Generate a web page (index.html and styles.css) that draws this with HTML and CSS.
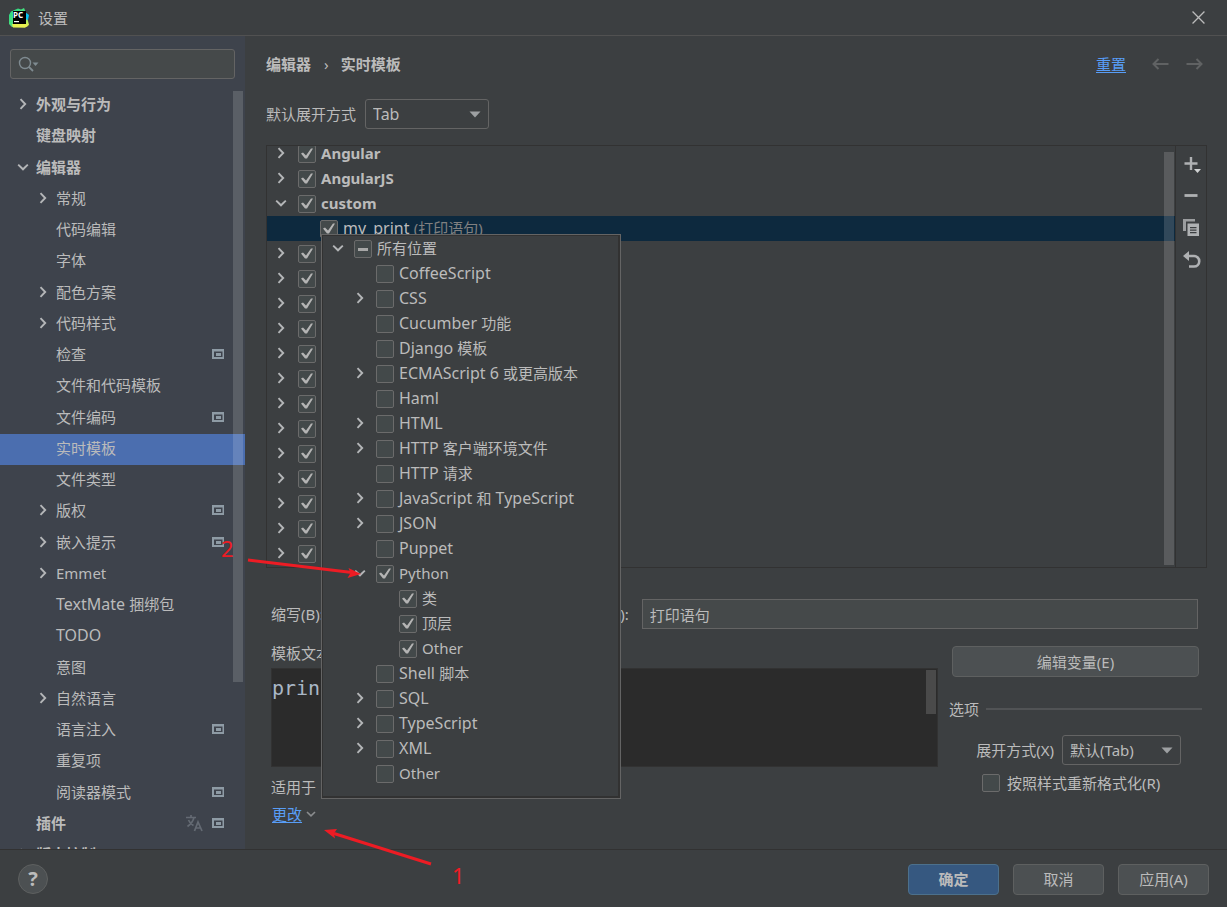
FILE: index.html
```html
<!DOCTYPE html>
<html lang="zh-CN">
<head>
<meta charset="utf-8">
<title>设置</title>
<link rel="stylesheet" href="styles.css">
</head>
<body>
<svg class="sprite" aria-hidden="true">
  <symbol id="right" viewBox="0 0 12 12"><path d="M3.500 1.200 8.200 6 3.500 10.800" fill="none" stroke="currentColor" stroke-width="1.900"/></symbol>
  <symbol id="down" viewBox="0 0 12 12"><path d="M1.200 3.600 6 8.300l4.800-4.700" fill="none" stroke="currentColor" stroke-width="1.900"/></symbol>
  <symbol id="project" viewBox="0 0 12 10"><path fill="#8e9ba5" fill-rule="evenodd" d="M0 0h12v10H0zM2 2.500v5.500h8.500V2.500z"/><path fill="#8e9ba5" d="M4 4h5v3H4z"/></symbol>
  <symbol id="triangle" viewBox="0 0 12 7"><path d="M.5.500h11L6 6.500z" fill="currentColor"/></symbol>
</svg>

<div class="dialog">
  <header class="titlebar">
    <svg class="logo" viewBox="0 0 20 20">
      <defs>
        <linearGradient id="lg" x1="0" y1="0" x2="1" y2="1"><stop offset="0" stop-color="#21d789"/><stop offset=".5" stop-color="#4ee07a"/><stop offset="1" stop-color="#fcf84a"/></linearGradient>
      </defs>
      <path d="M2 3.500 9 .5l3 1 3-1.500 1.500 3.500L18 9l2 8-4 2.500L3 19 0 16V7z" fill="url(#lg)"/>
      <path d="m16 4 4 3-1 5-3-1z" fill="#07c3f2"/>
      <path d="M3 16h14l2 2-3 1.500H4z" fill="#e9f04f"/>
      <path d="M4 3h13v13H4z" fill="#000"/>
      <text x="4" y="10" font-size="8" font-weight="700" fill="#fff">PC</text>
      <path d="M5 13h5v1.200H5z" fill="#fff"/>
    </svg>
    <span class="title">设置</span>
    <button class="icon-button close" aria-label="关闭"><svg viewBox="0 0 12 12"><path d="m.5.500 11 11m0-11-11 11" stroke="#bbb" stroke-width="1.200"/></svg></button>
  </header>

  <div class="body">
    <aside class="sidebar">
      <div class="search">
        <svg viewBox="0 0 22 16"><circle cx="7" cy="7" r="5.500" fill="none" stroke="#7f8b91" stroke-width="1.400"/><path d="m11 11 4 4" stroke="#7f8b91" stroke-width="1.800"/><path d="M14.500 6.500h6l-3 3.500z" fill="#7f8b91"/></svg>
        <input type="text" aria-label="搜索">
      </div>
      <ul class="nav">
        <li class="top"><svg class="chev"><use href="#right"/></svg>外观与行为</li>
        <li class="top">键盘映射</li>
        <li class="top"><svg class="chev"><use href="#down"/></svg>编辑器</li>
        <li><svg class="chev"><use href="#right"/></svg>常规</li>
        <li>代码编辑</li>
        <li>字体</li>
        <li><svg class="chev"><use href="#right"/></svg>配色方案</li>
        <li><svg class="chev"><use href="#right"/></svg>代码样式</li>
        <li>检查<svg class="proj"><use href="#project"/></svg></li>
        <li>文件和代码模板</li>
        <li>文件编码<svg class="proj"><use href="#project"/></svg></li>
        <li class="selected">实时模板</li>
        <li>文件类型</li>
        <li><svg class="chev"><use href="#right"/></svg>版权<svg class="proj"><use href="#project"/></svg></li>
        <li><svg class="chev"><use href="#right"/></svg>嵌入提示<svg class="proj"><use href="#project"/></svg></li>
        <li><svg class="chev"><use href="#right"/></svg>Emmet</li>
        <li><span><span class="latin">TextMate </span>捆绑包</span></li>
        <li class="latin">TODO</li>
        <li>意图</li>
        <li><svg class="chev"><use href="#right"/></svg>自然语言</li>
        <li>语言注入<svg class="proj"><use href="#project"/></svg></li>
        <li>重复项</li>
        <li>阅读器模式<svg class="proj"><use href="#project"/></svg></li>
        <li class="top">插件
          <svg class="lang" viewBox="0 0 18 18"><path d="M1 3.500h10M6 1v2.500M2.500 12.500C6 10 8 7.500 9 3.500M3.500 6c1 2.500 3 4.500 5 5.500M9.500 17 13 8l4 9M10.500 14h5" fill="none" stroke="#646a73" stroke-width="1.700"/></svg>
          <svg class="proj"><use href="#project"/></svg></li>
        <li class="top"><svg class="chev"><use href="#right"/></svg>版本控制</li>
      </ul>
      <div class="thumb nav-thumb"></div>
    </aside>

    <main class="main">
      <div class="crumbs">
        <b>编辑器</b><span class="sep">›</span><b>实时模板</b>
        <a class="reset" href="#">重置</a>
        <button class="icon-button arrow" aria-label="后退"><svg viewBox="0 0 17 12"><path d="M16.500 6H2M6.500 1 1.500 6l5 5" fill="none" stroke="#606263" stroke-width="2"/></svg></button>
        <button class="icon-button arrow" aria-label="前进"><svg viewBox="0 0 17 12"><path d="M.5 6H15M10.500 1l5 5-5 5" fill="none" stroke="#606263" stroke-width="2"/></svg></button>
      </div>
      <div class="expand-row">
        <label for="expand">默认展开方式</label>
        <span class="combo expand-combo"><select class="latin" id="expand"><option>Tab</option></select><svg><use href="#triangle"/></svg></span>
      </div>

      <section class="templates">
        <div class="list">
          <ul class="tree">
            <li><svg class="chev"><use href="#right"/></svg><label><input type="checkbox" checked><b>Angular</b></label></li>
            <li><svg class="chev"><use href="#right"/></svg><label><input type="checkbox" checked><b>AngularJS</b></label></li>
            <li><svg class="chev"><use href="#down"/></svg><label><input type="checkbox" checked><b>custom</b></label></li>
            <li class="current"><label><input type="checkbox" checked><span><span class="latin">my_print </span><span class="muted">(打印语句)</span></span></label></li>
            <li><svg class="chev"><use href="#right"/></svg><input type="checkbox" aria-label="模板组" checked></li>
            <li><svg class="chev"><use href="#right"/></svg><input type="checkbox" aria-label="模板组" checked></li>
            <li><svg class="chev"><use href="#right"/></svg><input type="checkbox" aria-label="模板组" checked></li>
            <li><svg class="chev"><use href="#right"/></svg><input type="checkbox" aria-label="模板组" checked></li>
            <li><svg class="chev"><use href="#right"/></svg><input type="checkbox" aria-label="模板组" checked></li>
            <li><svg class="chev"><use href="#right"/></svg><input type="checkbox" aria-label="模板组" checked></li>
            <li><svg class="chev"><use href="#right"/></svg><input type="checkbox" aria-label="模板组" checked></li>
            <li><svg class="chev"><use href="#right"/></svg><input type="checkbox" aria-label="模板组" checked></li>
            <li><svg class="chev"><use href="#right"/></svg><input type="checkbox" aria-label="模板组" checked></li>
            <li><svg class="chev"><use href="#right"/></svg><input type="checkbox" aria-label="模板组" checked></li>
            <li><svg class="chev"><use href="#right"/></svg><input type="checkbox" aria-label="模板组" checked></li>
            <li><svg class="chev"><use href="#right"/></svg><input type="checkbox" aria-label="模板组" checked></li>
            <li><svg class="chev"><use href="#right"/></svg><input type="checkbox" aria-label="模板组" checked></li>
          </ul>
          <div class="thumb list-thumb"></div>
        </div>
        <div class="tools">
          <button class="icon-button" aria-label="添加"><svg viewBox="0 0 18 18"><path d="M8 2v13M1.500 8.500h13" stroke="#afb1b3" stroke-width="2.400"/><path d="M11 14h7l-3.500 4z" fill="#d0d2d3"/></svg></button>
          <button class="icon-button" aria-label="移除"><svg viewBox="0 0 18 18"><path d="M1.500 8.500h13" stroke="#afb1b3" stroke-width="2.800"/></svg></button>
          <button class="icon-button" aria-label="复制"><svg viewBox="0 0 18 18"><path d="M0 0h12v2.500H3V12H0z" fill="#9b9d9f"/><path fill="#afb1b3" fill-rule="evenodd" d="M4.500 4.500h11.500V17h-11.500zM7 8v1.200h6.500V8zm0 2.500v1.200h6.500v-1.200zm0 2.500v1.200h6.500V13z"/></svg></button>
          <button class="icon-button" aria-label="还原"><svg viewBox="0 0 18 18"><path d="M4 5h7a5 5 0 0 1 0 10.500H6" fill="none" stroke="#afb1b3" stroke-width="2.600"/><path d="M6 0v10L0 5z" fill="#afb1b3"/></svg></button>
        </div>
      </section>

      <section class="details">
        <div class="fields">
          <label for="abbr">缩写(B):</label><input class="field abbr" id="abbr" type="text">
          <label for="desc">描述(D):</label><input class="field desc" id="desc" type="text" value="打印语句">
        </div>
        <div class="left">
          <label class="text-label" for="code">模板文本(T):</label>
          <div class="editor"><textarea id="code" spellcheck="false">print</textarea><div class="thumb code-thumb"></div></div>
          <div class="applies">适用于</div>
          <div class="change"><a href="#">更改</a><svg class="chev"><use href="#down"/></svg></div>
        </div>
        <div class="right">
          <button class="button edit-vars">编辑变量(E)</button>
          <div class="group"><span>选项</span><hr></div>
          <div class="option"><label for="mode">展开方式(X)</label><span class="combo mode-combo"><select id="mode"><option>默认(Tab)</option></select><svg><use href="#triangle"/></svg></span></div>
          <label class="reformat"><input type="checkbox">按照样式重新格式化(R)</label>
        </div>
      </section>
    </main>
  </div>

  <footer class="footer">
    <button class="help" aria-label="帮助">?</button>
    <button class="button primary">确定</button>
    <button class="button">取消</button>
    <button class="button">应用(A)</button>
  </footer>

  <div class="popup">
    <ul class="tree">
      <li class="root"><svg class="chev"><use href="#down"/></svg><label><input type="checkbox" class="mixed">所有位置</label></li>
      <li><label class="latin"><input type="checkbox">CoffeeScript</label></li>
      <li><svg class="chev"><use href="#right"/></svg><label class="latin"><input type="checkbox">CSS</label></li>
      <li><label><input type="checkbox"><span><span class="latin">Cucumber </span>功能</span></label></li>
      <li><label><input type="checkbox"><span><span class="latin">Django </span>模板</span></label></li>
      <li><svg class="chev"><use href="#right"/></svg><label><input type="checkbox"><span><span class="latin">ECMAScript 6 </span>或更高版本</span></label></li>
      <li><label class="latin"><input type="checkbox">Haml</label></li>
      <li><svg class="chev"><use href="#right"/></svg><label class="latin"><input type="checkbox">HTML</label></li>
      <li><svg class="chev"><use href="#right"/></svg><label><input type="checkbox"><span><span class="latin">HTTP </span>客户端环境文件</span></label></li>
      <li><label><input type="checkbox"><span><span class="latin">HTTP </span>请求</span></label></li>
      <li><svg class="chev"><use href="#right"/></svg><label><input type="checkbox"><span><span class="latin">JavaScript </span>和<span class="latin"> TypeScript</span></span></label></li>
      <li><svg class="chev"><use href="#right"/></svg><label class="latin"><input type="checkbox">JSON</label></li>
      <li><label class="latin"><input type="checkbox">Puppet</label></li>
      <li><svg class="chev"><use href="#down"/></svg><label><input type="checkbox" checked>Python</label></li>
      <li class="leaf"><label><input type="checkbox" checked>类</label></li>
      <li class="leaf"><label><input type="checkbox" checked>顶层</label></li>
      <li class="leaf"><label><input type="checkbox" checked>Other</label></li>
      <li><label><input type="checkbox"><span><span class="latin">Shell </span>脚本</span></label></li>
      <li><svg class="chev"><use href="#right"/></svg><label class="latin"><input type="checkbox">SQL</label></li>
      <li><svg class="chev"><use href="#right"/></svg><label class="latin"><input type="checkbox">TypeScript</label></li>
      <li><svg class="chev"><use href="#right"/></svg><label class="latin"><input type="checkbox">XML</label></li>
      <li><label><input type="checkbox">Other</label></li>
    </ul>
  </div>

  <svg class="marks" width="480" height="907">
    <path d="M248 560 352 572.500M431 864 334 833.500" stroke="#ed1c24" stroke-width="3"/>
    <path d="m361 574-13.500 4 3-5-2-5zM324 830l13-1-3 4.500 1 5z" fill="#ed1c24"/>
    <text x="221" y="557">2</text>
    <text x="452" y="884">1</text>
  </svg>
</div>
</body>
</html>
```
FILE: styles.css
```css
* { box-sizing: border-box; }

body {
  margin: 0;
  background: #3c3f41;
  color: #bbbbbb;
  font: 15px/20px "Noto Sans", "Noto Sans CJK SC", sans-serif;
}

button, input, select, textarea { font: inherit; color: inherit; }
ul { margin: 0; padding: 0; list-style: none; }
a { color: #589df6; text-underline-offset: 2px; }
svg { display: block; flex: none; }
.sprite { position: absolute; width: 0; height: 0; }
.latin { font-size: 16px; }

.dialog {
  position: relative;
  display: flex;
  flex-direction: column;
  height: 100vh;
  overflow: hidden;
}

.titlebar {
  display: flex;
  align-items: center;
  height: 36px;
  padding: 0 22px 0 9px;
  border-bottom: 1px solid #515151;
  flex: none;
}
.logo { width: 20px; height: 20px; margin-right: 9px; }
.icon-button { border: 0; padding: 0; background: none; }
.close { margin-left: auto; }
.close svg { width: 13px; height: 13px; }

.body { display: flex; flex: 1; min-height: 0; }

/* Sidebar */
.sidebar {
  position: relative;
  flex: none;
  width: 245px;
  padding-top: 13px;
  overflow: hidden;
  background: #3e434c;
}
.search {
  display: flex;
  align-items: center;
  height: 30px;
  margin: 0 10px 11px;
  padding-left: 7px;
  border: 1px solid #646464;
  border-radius: 3px;
  background: #45494a;
}
.search svg { width: 22px; height: 16px; }
.search input { flex: 1; min-width: 0; border: 0; background: none; outline: 0; }

.chev { width: 12px; height: 12px; color: #b4b6b8; }

.nav li {
  position: relative;
  display: flex;
  align-items: center;
  height: 31px;
  padding: 0 21px 4px 56px;
}
.nav li:nth-child(4n+3) { margin-top: 1px; }
.nav .top { padding-left: 36px; font-weight: 700; }
.nav .chev { margin-left: -19px; margin-right: 7px; }
.nav .proj { width: 12px; height: 10px; margin-left: auto; }
.nav .lang { width: 18px; height: 18px; margin-left: auto; margin-right: 9px; }
.nav .lang + .proj { margin-left: 0; }
.nav .selected { background: #4b6eaf; }

.thumb { position: absolute; width: 10px; background: rgba(255, 255, 255, 0.15); }
.nav-thumb { top: 55px; right: 2px; height: 591px; }

/* Main column */
.main {
  display: flex;
  flex: 1;
  flex-direction: column;
  min-width: 0;
  padding: 0 20px 0 21px;
}
.crumbs { display: flex; align-items: center; height: 56px; flex: none; }
.sep { margin: 0 12px 0 13px; }
.reset { margin-left: auto; margin-right: 9px; }
.arrow { margin-left: 17px; }
.arrow svg { width: 17px; height: 12px; }
.arrow:last-child { margin-right: 4px; }

.expand-row { display: flex; align-items: center; gap: 9px; padding: 7px 0 16px; }
.combo { position: relative; display: block; height: 30px; }
.combo select {
  width: 100%;
  height: 30px;
  padding: 0 30px 0 7px;
  border: 1px solid #646464;
  border-radius: 3px;
  appearance: none;
  background: #3c3f41;
}
.combo svg {
  position: absolute;
  top: 12px;
  right: 8px;
  width: 12px;
  height: 7px;
  color: #9da0a2;
  pointer-events: none;
}
.expand-combo { width: 124px; }
.mode-combo { width: 119px; }

.templates { display: flex; flex: 1; min-height: 0; border: 1px solid #323232; }
.list { position: relative; flex: 1; overflow: hidden; }
.list .tree { margin-top: -5px; }
.list-thumb { top: 6px; right: 1px; bottom: 2px; }
.tools {
  display: flex;
  flex-direction: column;
  align-items: center;
  gap: 14px;
  width: 31px;
  padding: 9px 0 0 1px;
  border-left: 1px solid #323232;
}
.tools svg { width: 18px; height: 18px; }

/* Check-box trees */
.tree li { display: flex; align-items: center; height: 25px; padding: 0 0 2px 31px; white-space: nowrap; }
.tree label { display: flex; align-items: center; gap: 5px; }
.tree .chev { margin-left: -23px; margin-right: 11px; }
.tree .current { padding-left: 53px; background: #0d293e; }
.muted { color: #808080; }

input[type="checkbox"] {
  display: block;
  flex: none;
  width: 18px;
  height: 18px;
  margin: 0;
  border: 1px solid #6b6b6b;
  border-radius: 2px;
  appearance: none;
  background: #43494a;
}
.tree input[type="checkbox"] { margin-top: 2px; }
input[type="checkbox"]:checked::before {
  content: "";
  display: block;
  width: 16px;
  height: 16px;
  background: #b4b4b4;
  clip-path: polygon(2px 8px, 4px 7px, 7px 10px, 12px 3px, 14px 3px, 8px 13px, 6px 13px);
}
.mixed::before {
  content: "";
  display: block;
  width: 10px;
  height: 3px;
  margin: 7px 3px;
  background: #a7a7a7;
}

/* Template details */
.details {
  display: grid;
  grid-template-columns: 1fr 253px;
  column-gap: 11px;
  flex: none;
  padding: 31px 5px 22px;
}
.fields { display: flex; grid-column: 1 / -1; align-items: center; gap: 13px; padding-right: 4px; }
.field { height: 30px; padding: 0 7px; border: 1px solid #646464; background: #45494a; }
.abbr { flex: 1; min-width: 0; }
.desc { width: 60%; }
.text-label { display: block; padding: 14px 0 5px; }
.editor { position: relative; height: 99px; border: 1px solid #323232; background: #2b2b2b; }
.editor textarea {
  display: block;
  width: 100%;
  height: 97px;
  padding: 6px 0;
  border: 0;
  outline: 0;
  resize: none;
  background: none;
  color: #a9b7c6;
  font: 20px/26px "DejaVu Sans Mono", monospace;
}
.code-thumb { top: 1px; right: 1px; height: 44px; }
.applies { padding-top: 9px; line-height: 22px; }
.change { display: flex; align-items: center; gap: 4px; padding: 3px 0 0 1px; line-height: 26px; }
.change .chev { width: 10px; color: #8b8d8f; }

.button {
  height: 31px;
  border: 1px solid #5e6060;
  border-radius: 4px;
  background: #4c5052;
}
.edit-vars { display: block; width: 247px; margin: 17px 3px 16px; }
.group { display: flex; align-items: center; gap: 7px; height: 32px; }
.group hr { flex: 1; margin: 0; border: 0; border-top: 2px solid #515355; }
.option { display: flex; align-items: center; gap: 8px; padding: 10px 21px 0 0; justify-content: flex-end; }
.reformat { display: flex; align-items: center; gap: 7px; padding: 8px 0 0 33px; }

/* Footer */
.footer {
  display: flex;
  align-items: center;
  gap: 14px;
  flex: none;
  height: 58px;
  padding: 1px 18px 0;
  border-top: 1px solid #323232;
}
.footer .button { width: 91px; }
.footer .primary { border-color: #4c708c; background: #365880; font-weight: 700; }
.help {
  width: 30px;
  height: 30px;
  margin-right: auto;
  padding: 0;
  border: 1px solid #5e6060;
  border-radius: 50%;
  background: #4c5052;
  font-size: 20px;
  font-weight: 700;
}

/* Context chooser */
.popup {
  position: absolute;
  top: 234px;
  left: 321px;
  width: 300px;
  height: 565px;
  padding: 1px 0;
  border: 1px solid #646464;
  background: #3c3f41;
  box-shadow: inset -2px -2px #323232, inset 1px 1px #323232;
}
.popup .tree li { padding-left: 54px; }
.popup .tree .chev { margin-left: -22px; margin-right: 10px; }
.popup .tree .root { padding-left: 32px; }
.popup .tree .leaf { padding-left: 77px; }

.marks { position: absolute; top: 0; left: 0; pointer-events: none; }
.marks text { fill: #ed1c24; font-size: 22px; }
```
